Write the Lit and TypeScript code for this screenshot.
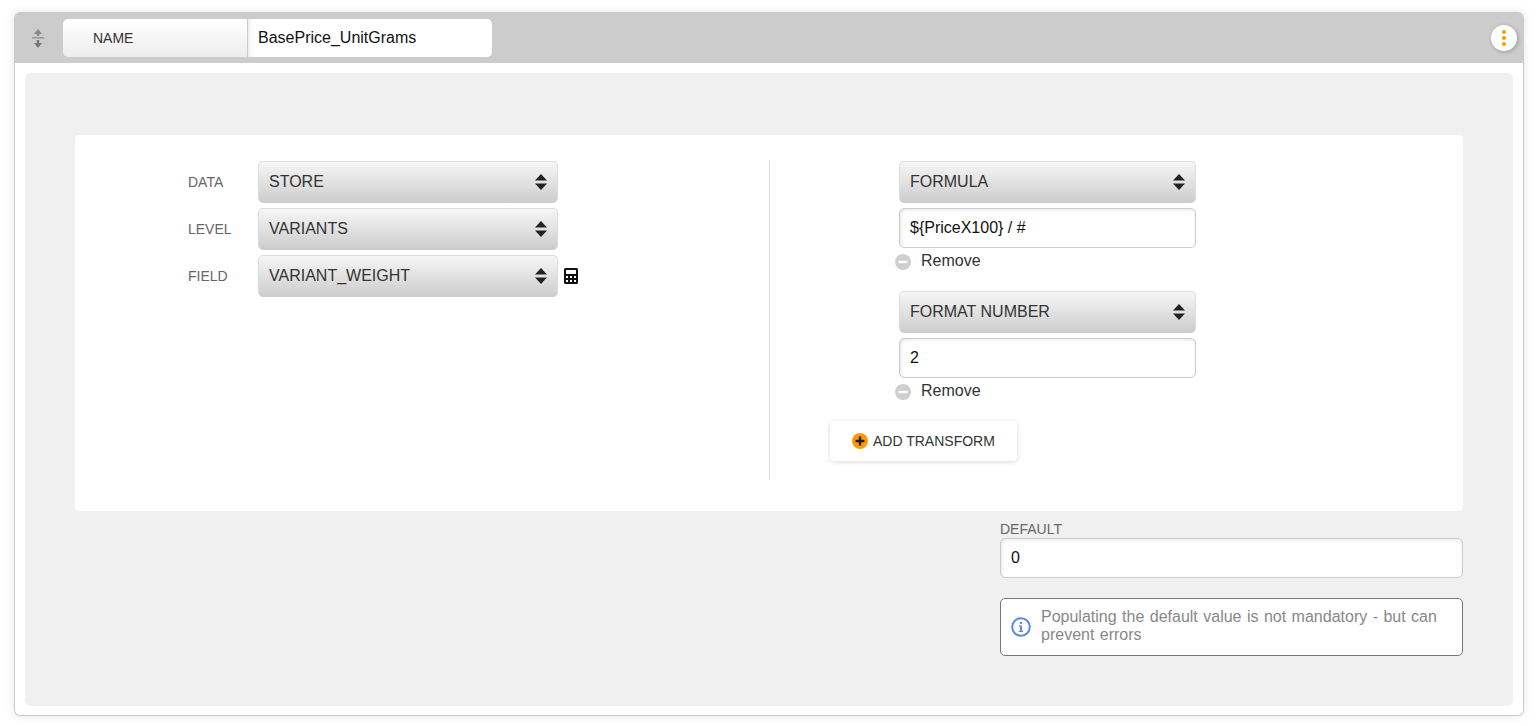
import { LitElement, html, css, svg } from "lit";
import { customElement } from "lit/decorators.js";

const arrows = html`<svg class="arrows" width="12" height="16" viewBox="0 0 12 16">
  <path d="M6 0 12 6.500H0z" fill="#222"/><path d="M0 9.500h12L6 16z" fill="#222"/></svg>`;

const minus = html`<svg width="16" height="16" viewBox="0 0 16 16" class="rm-icon">
  <circle cx="8" cy="8" r="8" fill="#cfcfcf"/><rect x="3.500" y="6.800" width="9" height="2.400" fill="#fff"/></svg>`;

@customElement("app-root")
export class AppRoot extends LitElement {
  static styles = css`
    :host {
      display: block;
      box-sizing: border-box;
      height: 726px;
      padding: 12px 14px 10px;
      font-family: "Liberation Sans", Arial, sans-serif;
      color: #333;
      background: #fff;
    }
    .card {
      height: 100%;
      box-sizing: border-box;
      display: flex;
      flex-direction: column;
      border-radius: 6px;
      background: #fff;
      border: 1px solid #ccc;
      border-top: 0;
      box-shadow: 0 0 10px rgba(0, 0, 0, 0.1);
      overflow: hidden;
    }
    .header {
      height: 51px;
      flex: none;
      display: flex;
      align-items: center;
      background: #ccc;
      padding: 0 6px 0 16px;
    }
    .handle { display: block; width: 14px; height: 20px; margin-right: 18px; }
    .name {
      display: flex;
      width: 429px;
      height: 38px;
      border-radius: 5px;
      overflow: hidden;
    }
    .name-label {
      width: 185px;
      box-sizing: border-box;
      padding-left: 30px;
      display: flex;
      align-items: center;
      font-size: 14px;
      color: #333;
      background: linear-gradient(#fff, #ededed);
      border-right: 1px solid #ccc;
    }
    .name-input {
      flex: 1;
      min-width: 0;
      border: 0;
      outline: 0;
      background: #fff;
      padding: 0 0 0 10px;
      font: 16px "Liberation Sans", Arial, sans-serif;
      color: #111;
      box-shadow: inset 6px 0 6px -6px rgba(0, 0, 0, 0.15);
    }
    .menu {
      margin-left: auto;
      width: 26px;
      height: 26px;
      border-radius: 50%;
      background: #fff;
      box-shadow: 1px 1px 4px rgba(0, 0, 0, 0.25);
      display: flex;
      flex-direction: column;
      align-items: center;
      justify-content: center;
      gap: 2px;
    }
    .menu i { width: 4px; height: 4px; border-radius: 50%; background: #f90; }
    .body { flex: 1; padding: 10px 10px 9px; display: flex; min-height: 0; }
    .panel {
      flex: 1;
      background: #f0f0f0;
      border-radius: 6px;
      padding: 62px 50px 0;
    }
    .box {
      background: #fff;
      border-radius: 4px;
      height: 376px;
      box-sizing: border-box;
      padding: 25px 0 31px;
      display: grid;
      grid-template-columns: 695px 1fr;
    }
    .left {
      border-right: 1px solid #ddd;
      padding: 1px 0 0 113px;
      display: flex;
      flex-direction: column;
      gap: 5px;
    }
    .row { display: flex; align-items: center; }
    .row label { width: 70px; font-size: 14px; color: #666; }
    .select {
      width: 300px;
      height: 42px;
      box-sizing: border-box;
      display: flex;
      align-items: center;
      justify-content: space-between;
      padding: 0 10px 2px;
      border: 1px solid #ddd;
      border-bottom: 0;
      border-radius: 5px;
      background: linear-gradient(#f6f6f6, #cccccc);
      font-size: 16px;
      color: #333;
    }
    .calc { display: block; margin-left: 6px; }
    .right { padding: 1px 0 0 60px; display: flex; flex-direction: column; align-items: flex-start; }
    .transform { margin-left: 69px; width: 297px; margin-bottom: 19px; }
    .transform .select { width: 100%; }
    .field {
      display: block;
      width: 100%;
      height: 40px;
      box-sizing: border-box;
      margin-top: 5px;
      padding: 0 10px 1px;
      border: 1px solid #ccc;
      border-radius: 5px;
      outline: 0;
      background: #fff;
      font: 16px "Liberation Sans", Arial, sans-serif;
      color: #111;
      box-shadow: inset 0 2px 5px -2px rgba(0, 0, 0, 0.12), inset 4px 0 5px -4px rgba(0, 0, 0, 0.12);
    }
    .remove {
      display: flex;
      align-items: center;
      gap: 10px;
      margin: 4px 0 0 -4px;
      height: 20px;
      font-size: 16px;
      color: #333;
    }
    .rm-icon { display: block; }
    .remove span { margin-bottom: 2px; }
    .add {
      height: 40px;
      width: 187px;
      box-sizing: border-box;
      padding-left: 22px;
      display: flex;
      align-items: center;
      gap: 5px;
      border-radius: 4px;
      background: #fff;
      box-shadow: 0 1px 5px rgba(0, 0, 0, 0.15);
      font-size: 14px;
      color: #333;
    }
    .add svg { display: block; }
    .bottom { margin: 10px 0 0 auto; width: 463px; }
    .bottom label { display: block; font-size: 14px; line-height: 17px; color: #666; }
    .bottom .field { margin-top: 0; }
    .info {
      margin-top: 20px;
      height: 58px;
      box-sizing: border-box;
      border: 1px solid #777;
      border-radius: 5px;
      background: #fff;
      display: flex;
      align-items: center;
      padding: 0 10px;
      gap: 10px;
      font-size: 16px;
      line-height: 18px;
      color: #888;
    }
    .info svg { display: block; flex: none; }
    .info span { word-spacing: 1px; margin-bottom: 2px; }
  `;

  private row(label: string, value: string, extra: unknown = null) {
    return html`<div class="row"><label>${label}</label>
      <div class="select"><span>${value}</span>${arrows}</div>${extra}</div>`;
  }

  private transform(name: string, value: string) {
    return html`<div class="transform">
      <div class="select"><span>${name}</span>${arrows}</div>
      <input class="field" .value=${value} />
      <div class="remove">${minus}<span>Remove</span></div>
    </div>`;
  }

  render() {
    const calc = svg`<path fill-rule="evenodd" fill="#111" d="M1.500 0h11a1.500 1.500 0 0 1 1.500 1.500v13a1.500 1.500 0 0 1-1.500 1.500h-11A1.500 1.500 0 0 1 0 14.500v-13A1.500 1.500 0 0 1 1.500 0zM2 2v4h10V2zM2 8v2h2V8zm4 0v2h2V8zm4 0v2h2V8zM2 12v2h2v-2zm4 0v2h2v-2zm4 0v2h2v-2z"/>`;
    return html`<div class="card">
      <div class="header">
        <svg class="handle" viewBox="0 0 14 20">
          <path d="M7 1 11 6H8.200v2H5.800V6H3z" fill="#888"/><rect x="1" y="9" width="12" height="1.600" fill="#999"/><path d="M5.800 12h2.400v3H11l-4 5-4-5h2.800z" fill="#777"/>
        </svg>
        <div class="name">
          <div class="name-label">NAME</div>
          <input class="name-input" .value=${"BasePrice_UnitGrams"} />
        </div>
        <div class="menu"><i></i><i></i><i></i></div>
      </div>
      <div class="body">
        <div class="panel">
          <div class="box">
            <div class="left">
              ${this.row("DATA", "STORE")}
              ${this.row("LEVEL", "VARIANTS")}
              ${this.row("FIELD", "VARIANT_WEIGHT", html`<svg class="calc" width="14" height="16" viewBox="0 0 14 16">${calc}</svg>`)}
            </div>
            <div class="right">
              ${this.transform("FORMULA", "${PriceX100} / #")}
              ${this.transform("FORMAT NUMBER", "2")}
              <div class="add">
                <svg width="16" height="16" viewBox="0 0 16 16">
                  <circle cx="8" cy="8" r="8" fill="#f90"/>
                  <path d="M8 3.500v9M3.500 8h9" stroke="#222" stroke-width="2.400"/>
                </svg>
                <span>ADD TRANSFORM</span>
              </div>
            </div>
          </div>
          <div class="bottom">
            <label>DEFAULT</label>
            <input class="field" .value=${"0"} />
            <div class="info">
              <svg width="20" height="20" viewBox="0 0 20 20">
                <circle cx="10" cy="10" r="8.800" fill="none" stroke="#5b8be0" stroke-width="2"/>
                <circle cx="10" cy="6" r="1.300" fill="#5b8be0"/>
                <path d="M8 8.500h3v5.200h1.200v1.300H7.800v-1.300H9V9.800H8z" fill="#5b8be0"/>
              </svg>
              <span>Populating the default value is not mandatory - but can prevent errors</span>
            </div>
          </div>
        </div>
      </div>
    </div>`;
  }
}
